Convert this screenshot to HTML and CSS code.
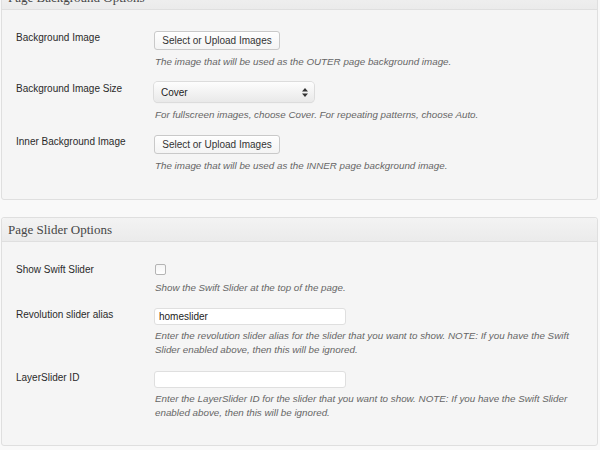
FILE: index.html
```html
<!DOCTYPE html>
<html lang="en">
<head>
    <meta charset="UTF-8">
    <meta name="viewport" content="width=device-width, initial-scale=1.0">
    <title>Page Options</title>
    <link rel="stylesheet" href="styles.css">
</head>
<body>
    <div class="postbox first">
        <h3 class="boxTitle">Page Background Options</h3>
        <div class="inside bgInside">
            <div class="row">
                <div class="label">Background Image</div>
                <div class="field">
                    <button class="uploadBtn">Select or Upload Images</button>
                    <p class="desc">The image that will be used as the OUTER page background image.</p>
                </div>
            </div>
            <div class="row">
                <div class="label">Background Image Size</div>
                <div class="field">
                    <div class="select">
                        <span>Cover</span>
                        <svg class="arrows" width="6" height="9" viewBox="0 0 6 9">
                            <path d="M3 0 L6 3.5 L0 3.5 Z M3 9 L6 5.5 L0 5.5 Z" fill="#333"/>
                        </svg>
                    </div>
                    <p class="desc">For fullscreen images, choose Cover. For repeating patterns, choose Auto.</p>
                </div>
            </div>
            <div class="row">
                <div class="label">Inner Background Image</div>
                <div class="field">
                    <button class="uploadBtn">Select or Upload Images</button>
                    <p class="desc">The image that will be used as the INNER page background image.</p>
                </div>
            </div>
        </div>
    </div>

    <div class="postbox">
        <h3 class="boxTitle">Page Slider Options</h3>
        <div class="inside sliderInside">
            <div class="row">
                <div class="label">Show Swift Slider</div>
                <div class="field">
                    <div class="checkWrap"><span class="checkbox"></span></div>
                    <p class="desc">Show the Swift Slider at the top of the page.</p>
                </div>
            </div>
            <div class="row">
                <div class="label">Revolution slider alias</div>
                <div class="field">
                    <div class="textInput">homeslider</div>
                    <p class="desc wide">Enter the revolution slider alias for the slider that you want to show. NOTE: If you have the Swift Slider enabled above, then this will be ignored.</p>
                </div>
            </div>
            <div class="row">
                <div class="label">LayerSlider ID</div>
                <div class="field">
                    <div class="textInput"></div>
                    <p class="desc wide">Enter the LayerSlider ID for the slider that you want to show. NOTE: If you have the Swift Slider enabled above, then this will be ignored.</p>
                </div>
            </div>
        </div>
    </div>
</body>
</html>
```

FILE: styles.css
```css
body{
    margin: 0;
    padding: 0;
    background-color: #f9f9f9;
    font-family: "Liberation Sans", Arial, sans-serif;
    font-size: 10px;
    color: #333;
}
.postbox{
    width: 597px;
    margin-left: 1px;
    border: 1px solid #dfdfdf;
    border-radius: 3px;
    background-color: #f5f5f5;
    box-sizing: border-box;
    box-shadow: 0 1px 0 #fff inset;
}
.postbox.first{
    margin-top: -15px;
    margin-bottom: 17px;
}
.boxTitle{
    margin: 0;
    height: 23px;
    line-height: 23px;
    padding-left: 6px;
    font-family: "Liberation Serif", Georgia, serif;
    font-size: 13px;
    font-weight: normal;
    color: #464646;
    background: linear-gradient(to bottom, #f3f3f3, #ebebeb);
    border-bottom: 1px solid #dfdfdf;
    border-radius: 3px 3px 0 0;
}
.inside{
    display: flex;
    flex-direction: column;
    gap: 14px;
    padding: 0 14px;
}
.bgInside{
    padding-top: 21px;
    padding-bottom: 27px;
}
.sliderInside{
    padding-top: 21px;
    padding-bottom: 25px;
}
.row{
    display: grid;
    grid-template-columns: 138px 1fr;
}
.label{
    line-height: 14px;
    color: #2a2a2a;
}
.field{
    display: flex;
    flex-direction: column;
    align-items: flex-start;
}
.uploadBtn{
    height: 19px;
    width: 126px;
    padding: 0;
    font-family: "Liberation Sans", Arial, sans-serif;
    font-size: 10px;
    color: #333;
    border: 1px solid #c9c9c9;
    border-radius: 3px;
    background: linear-gradient(to bottom, #fefefe, #f4f4f4);
    box-shadow: 0 1px 0 #fff inset;
}
.select{
    height: 20px;
    width: 160px;
    box-sizing: border-box;
    display: flex;
    align-items: center;
    justify-content: space-between;
    padding: 0 6px 0 7px;
    border-radius: 4px;
    background: linear-gradient(to bottom, #fdfdfd, #e9e9e9);
    box-shadow: 0 0 0 1px #dcdcdc, 0 1px 1px rgba(0,0,0,0.12);
    color: #222;
}
.select span{
    font-size: 10px;
}
.desc{
    margin: 5px 0 0 1px;
    font-style: italic;
    font-size: 9.8px;
    color: #666;
    line-height: 13px;
}
.desc.wide{
    width: 430px;
    margin-top: 4px;
    line-height: 14px;
}
.field .select + .desc{
    margin-top: 6px;
}
.checkWrap{
    height: 12px;
    display: flex;
    align-items: center;
    padding-left: 1px;
}
.checkbox{
    width: 9px;
    height: 9px;
    border: 1px solid #b4b4b4;
    border-radius: 2px;
    background: linear-gradient(to bottom, #f4f4f4, #fff);
}
.checkWrap + .desc{
    margin-top: 6px;
}
.textInput{
    width: 192px;
    height: 17px;
    box-sizing: border-box;
    border: 1px solid #dfdfdf;
    border-radius: 3px;
    background-color: #fff;
    line-height: 15px;
    padding-left: 4px;
    font-size: 10px;
    color: #222;
}
```
